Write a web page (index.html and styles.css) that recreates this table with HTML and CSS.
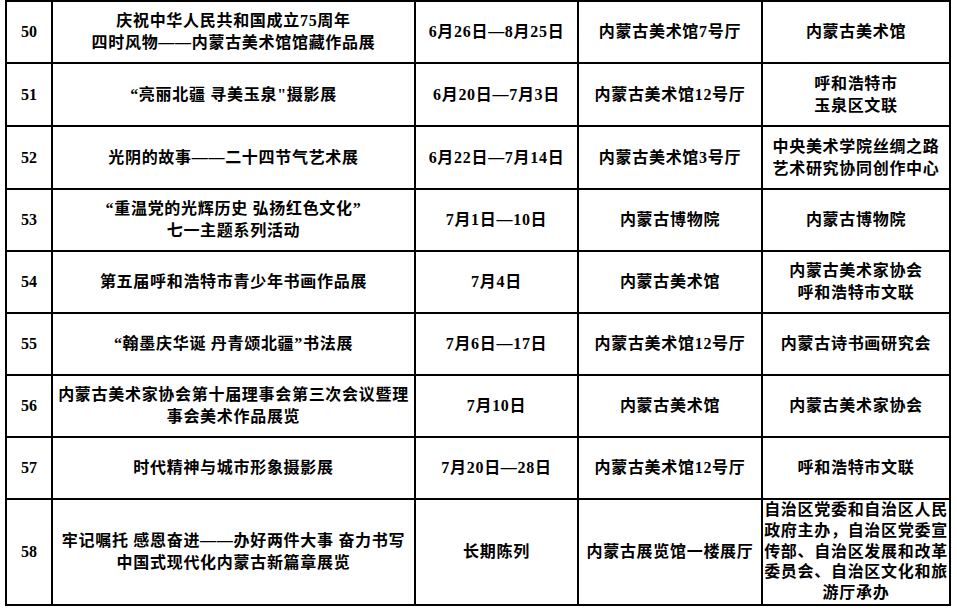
FILE: index.html
```html
<!DOCTYPE html>
<html lang="zh-CN">
<head>
<meta charset="utf-8">
<title>展览安排</title>
<link rel="stylesheet" href="styles.css">
</head>
<body>
<div class="page">
<table class="schedule">
  <colgroup>
    <col class="c-no"><col class="c-title"><col class="c-date"><col class="c-place"><col class="c-org">
  </colgroup>
  <tbody>
    <tr class="r60">
      <td class="no">50</td>
      <td>庆祝中华人民共和国成立75周年<br>四时风物——内蒙古美术馆馆藏作品展</td>
      <td>6月26日—8月25日</td>
      <td>内蒙古美术馆7号厅</td>
      <td>内蒙古美术馆</td>
    </tr>
    <tr class="r61">
      <td class="no">51</td>
      <td>“亮丽北疆 寻美玉泉"摄影展</td>
      <td>6月20日—7月3日</td>
      <td>内蒙古美术馆12号厅</td>
      <td>呼和浩特市<br>玉泉区文联</td>
    </tr>
    <tr class="r61">
      <td class="no">52</td>
      <td>光阴的故事——二十四节气艺术展</td>
      <td>6月22日—7月14日</td>
      <td>内蒙古美术馆3号厅</td>
      <td>中央美术学院丝绸之路<br>艺术研究协同创作中心</td>
    </tr>
    <tr class="r60">
      <td class="no">53</td>
      <td>“重温党的光辉历史 弘扬红色文化”<br>七一主题系列活动</td>
      <td>7月1日—10日</td>
      <td>内蒙古博物院</td>
      <td>内蒙古博物院</td>
    </tr>
    <tr class="r60">
      <td class="no">54</td>
      <td>第五届呼和浩特市青少年书画作品展</td>
      <td>7月4日</td>
      <td>内蒙古美术馆</td>
      <td>内蒙古美术家协会<br>呼和浩特市文联</td>
    </tr>
    <tr class="r60">
      <td class="no">55</td>
      <td>“翰墨庆华诞 丹青颂北疆”书法展</td>
      <td>7月6日—17日</td>
      <td>内蒙古美术馆12号厅</td>
      <td>内蒙古诗书画研究会</td>
    </tr>
    <tr class="r60">
      <td class="no">56</td>
      <td>内蒙古美术家协会第十届理事会第三次会议暨理<br>事会美术作品展览</td>
      <td>7月10日</td>
      <td>内蒙古美术馆</td>
      <td>内蒙古美术家协会</td>
    </tr>
    <tr class="r60">
      <td class="no">57</td>
      <td>时代精神与城市形象摄影展</td>
      <td>7月20日—28日</td>
      <td>内蒙古美术馆12号厅</td>
      <td>呼和浩特市文联</td>
    </tr>
    <tr class="r104">
      <td class="no">58</td>
      <td>牢记嘱托 感恩奋进——办好两件大事 奋力书写<br>中国式现代化内蒙古新篇章展览</td>
      <td>长期陈列</td>
      <td>内蒙古展览馆一楼展厅</td>
      <td class="dense">自治区党委和自治区人民<br>政府主办，自治区党委宣<br>传部、自治区发展和改革<br>委员会、自治区文化和旅<br>游厅承办</td>
    </tr>
  </tbody>
</table>
</div>
</body>
</html>
```

FILE: styles.css
```css
html, body {
  margin: 0;
  padding: 0;
  background: #ffffff;
}

.page {
  padding: 0 0 0 5px;
}

.schedule {
  border-collapse: separate;
  border-spacing: 0;
  table-layout: fixed;
  width: 946px;
  border-left: 2px solid #000;
  border-top: 2px solid #000;
  font-family: "Liberation Serif", "Noto Sans CJK SC", serif;
  font-weight: bold;
  font-size: 16px;
  letter-spacing: 0.7px;
  line-height: 22px;
  color: #000;
}

.c-no { width: 46px; }
.c-title { width: 363px; }
.c-date { width: 163px; }
.c-place { width: 184px; }
.c-org { width: 188px; }

.schedule td {
  padding: 0;
  border-right: 2px solid #000;
  border-bottom: 2px solid #000;
  text-align: center;
  vertical-align: middle;
  white-space: nowrap;
  overflow: hidden;
}

.r60 td { height: 60px; }
.r61 td { height: 61px; }
.r104 td { height: 104px; }

.schedule td.no {
  letter-spacing: 0;
}

.schedule td.dense {
  line-height: 20.8px;
}
```
